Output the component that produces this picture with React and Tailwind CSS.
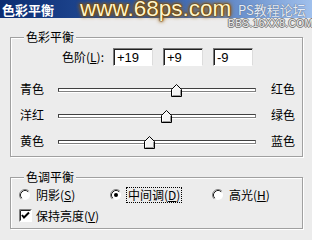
const sliders = [
  { left: "青色", right: "红色", value: 19 },
  { left: "洋红", right: "绿色", value: 9 },
  { left: "黄色", right: "蓝色", value: -9 },
];

const TRACK_W = 198;

function Group({ title, className, children }) {
  return (
    <div
      className={
        "relative ml-[10px] w-[293px] border border-[#a0a0a0] shadow-[inset_1px_1px_0_#fff,1px_1px_0_#fff] " +
        className
      }
    >
      <span className="absolute left-[13px] -top-[8px] px-[2px] bg-[#ececec] leading-[14px]">
        {title}
      </span>
      {children}
    </div>
  );
}

function Thumb({ value }) {
  const center = ((value + 100) / 200) * TRACK_W;
  return (
    <svg
      width="11"
      height="13"
      viewBox="0 0 11 13"
      className="absolute -top-[5px]"
      style={{ left: Math.round(center - 5.5) }}
    >
      <path d="M0.5 12.5V5.5L5.5 0.5L10.5 5.5V12.5Z" fill="#f4f4f4" stroke="#000" />
      <path d="M1.5 11.5V5.9L5.5 1.9" fill="none" stroke="#fff" />
      <path d="M1.5 11.5H9.5V5.9" fill="none" stroke="#9a9a9a" />
    </svg>
  );
}

function Radio({ checked }) {
  return (
    <svg width="12" height="12" viewBox="0 0 12 12" className="shrink-0">
      <circle cx="6" cy="6" r="5" fill="#fff" />
      <path d="M9.89 2.11A5.5 5.5 0 0 0 2.11 9.89" fill="none" stroke="#808080" />
      <path d="M9.18 2.82A4.5 4.5 0 0 0 2.82 9.18" fill="none" stroke="#202020" />
      {checked && <circle cx="6" cy="6" r="2" fill="#000" />}
    </svg>
  );
}

function Checkbox() {
  return (
    <svg width="13" height="13" viewBox="0 0 13 13" className="shrink-0">
      <rect x="0" y="0" width="13" height="13" fill="#fff" />
      <path d="M0.5 12.5V0.5H12.5" fill="none" stroke="#808080" />
      <path d="M1.5 11.5V1.5H11.5" fill="none" stroke="#202020" />
      <path d="M3 6L5 8.5L10 3.5" fill="none" stroke="#000" strokeWidth="2" />
    </svg>
  );
}

function NumBox({ children }) {
  return (
    <div className="w-[40px] h-[18px] bg-white border border-t-[#7a7a7a] border-l-[#7a7a7a] border-r-[#dcdcdc] border-b-[#ffffff] shadow-[inset_1px_1px_0_#202020] flex items-center pl-[3px] font-['Liberation_Sans',sans-serif] text-[13px]">
      {children}
    </div>
  );
}

export default function App() {
  return (
    <div className="relative w-[312px] h-[240px] overflow-hidden bg-[#ececec] text-black text-[12px] leading-none font-['Noto_Sans_CJK_SC','Noto_Sans',sans-serif]">
      <div className="h-[18px] flex items-center pl-[2px] bg-gradient-to-r from-[#0a2c72] via-[#2f5aa6] to-[#a0c0ec]">
        <span className="text-white font-bold text-[13px]">色彩平衡</span>
      </div>

      <Group title="色彩平衡" className="mt-[19px] h-[120px]">
        <div className="flex items-center mt-[10px] h-[18px]">
          <span className="w-[93px] text-right">
            色阶(<span className="underline">L</span>):
          </span>
          <div className="flex ml-[9px] gap-[10px]">
            <NumBox>+19</NumBox>
            <NumBox>+9</NumBox>
            <NumBox>-9</NumBox>
          </div>
        </div>

        <div className="mt-[11px] flex flex-col">
          {sliders.map((s) => (
            <div key={s.left} className="h-[26px] flex items-center">
              <span className="w-[47px] pl-[9px] mb-[3px]">{s.left}</span>
              <div className="relative w-[198px] h-[4px] bg-white border border-[#808080] border-t-[#404040] border-l-[#404040] shadow-[0_1px_0_#fff]">
                <Thumb value={s.value} />
              </div>
              <span className="ml-[15px] mb-[3px]">{s.right}</span>
            </div>
          ))}
        </div>
      </Group>

      <Group title="色调平衡" className="mt-[20px] h-[52px]">
        <div className="flex items-center mt-[7px] h-[20px] pl-[8px]">
          <div className="w-[91px] flex items-center gap-[5px]">
            <Radio />
            <span>
              阴影(<span className="underline">S</span>)
            </span>
          </div>
          <div className="w-[102px] flex items-center gap-[4px]">
            <Radio checked />
            <span className="border border-dotted border-black px-[1px] py-[1px]">
              中间调(<span className="underline">D</span>)
            </span>
          </div>
          <div className="flex items-center gap-[5px]">
            <Radio />
            <span>
              高光(<span className="underline">H</span>)
            </span>
          </div>
        </div>
        <div className="flex items-center h-[21px] pl-[8px] gap-[4px]">
          <Checkbox />
          <span>
            保持亮度(<span className="underline">V</span>)
          </span>
        </div>
      </Group>

      {/* watermark */}
      <span className="absolute left-[80px] top-0 text-[22.5px] leading-[18px] text-[#fff3c8] font-['Liberation_Sans',sans-serif] [text-shadow:0_0_1px_#5a3400,0_0_1px_#5a3400,0_0_2px_#6b4200,0_0_3px_#8a5a10,0_0_4px_#a06a18,0_0_5px_#a06a18]">
        www.68ps.com
      </span>
      <span className="absolute left-[238px] top-[3px] text-[13px] leading-[13px] text-[#e4ebf6] [text-shadow:0_0_1px_#5a6a84,0_0_1px_#5a6a84]">
        PS教程论坛
      </span>
      <span className="absolute left-[228px] top-[19px] text-[10px] leading-[10px] tracking-[0.5px] text-[#ececec] font-['Liberation_Sans',sans-serif] [text-shadow:1px_0_0_#777,-1px_0_0_#777,0_1px_0_#777,0_-1px_0_#777]">
        BBS.16XX8.COM
      </span>
    </div>
  );
}
